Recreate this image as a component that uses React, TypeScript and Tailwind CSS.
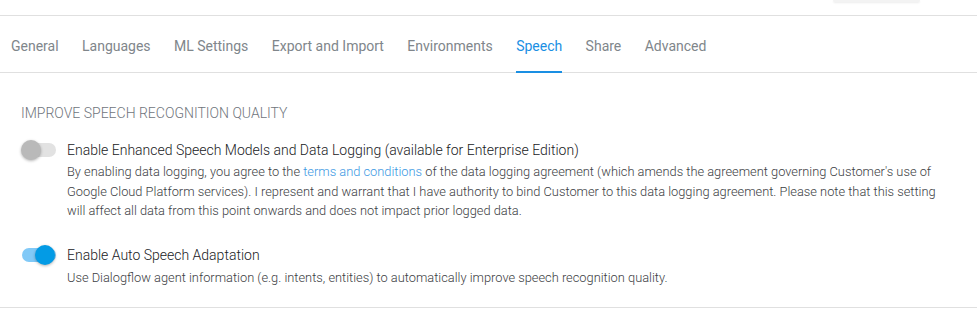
import React from "react";

function Toggle({ on }: { on: boolean }) {
  return (
    <div className="relative w-[36px] h-[20px] shrink-0">
      <div
        className={
          "absolute left-[1px] top-[3px] w-[34px] h-[14px] rounded-full " +
          (on ? "bg-[#81c9f7]" : "bg-[#e2e2e2]")
        }
      />
      <div
        className={
          "absolute top-0 w-[20px] h-[20px] rounded-full shadow-[0_1px_3px_rgba(0,0,0,0.3)] " +
          (on ? "left-[14px] bg-[#039be5]" : "left-0 bg-[#b9b9b9]")
        }
      />
    </div>
  );
}

export default function App() {
  const tabs = [
    "General",
    "Languages",
    "ML Settings",
    "Export and Import",
    "Environments",
    "Speech",
    "Share",
    "Advanced",
  ];
  return (
    <div
      className="w-[977px] h-[329px] bg-white overflow-hidden"
      style={{ fontFamily: "Roboto, 'Noto Sans', sans-serif" }}
    >
      <div className="h-[16px] border-b border-[#e0e0e0] flex justify-end pr-[57px]">
        <div className="w-[87px] h-[2px] rounded-b bg-[#f3f3f3] shadow-[0_1px_2px_rgba(0,0,0,0.08)]" />
      </div>
      <div className="h-[57px] border-b border-[#e0e0e0] flex pl-[11px] gap-[23.4px]">
        {tabs.map((t) => (
          <div
            key={t}
            className={
              "relative flex items-center pt-[4px] text-[14px] " +
              (t === "Speech" ? "text-[#1a8fe3]" : "text-[#80868b]")
            }
          >
            {t}
            {t === "Speech" && (
              <div className="absolute left-0 right-0 bottom-[-1px] h-[2px] bg-[#1a8fe3]" />
            )}
          </div>
        ))}
      </div>
      <div className="pl-[21px] pt-[31px] pb-[20px] border-b border-[#e0e0e0]">
        <div className="text-[14px] leading-[18px] font-light text-[#6f757c] uppercase">
          Improve speech recognition quality
        </div>
        <div className="flex gap-[10px] mt-[18px]">
          <Toggle on={false} />
          <div>
            <div className="text-[14px] leading-[20px] font-light text-[#202124]">
              Enable Enhanced Speech Models and Data Logging (available for Enterprise Edition)
            </div>
            <div className="mt-[2px] text-[12.83px] leading-[19.5px] font-light text-[#3c4043]">
              By enabling data logging, you agree to the{" "}
              <span className="text-[#3a98e3]">terms and conditions</span> of the data logging
              agreement (which amends the agreement governing Customer's use of
              <br />
              Google Cloud Platform services). I represent and warrant that I have authority to
              bind Customer to this data logging agreement. Please note that this setting
              <br />
              will affect all data from this point onwards and does not impact prior logged data.
            </div>
          </div>
        </div>
        <div className="flex gap-[10px] mt-[24px]">
          <Toggle on={true} />
          <div>
            <div className="text-[14px] leading-[20px] font-light text-[#202124]">
              Enable Auto Speech Adaptation
            </div>
            <div className="mt-[3px] text-[12.83px] leading-[19.5px] font-light text-[#3c4043]">
              Use Dialogflow agent information (e.g. intents, entities) to automatically improve
              speech recognition quality.
            </div>
          </div>
        </div>
      </div>
    </div>
  );
}
